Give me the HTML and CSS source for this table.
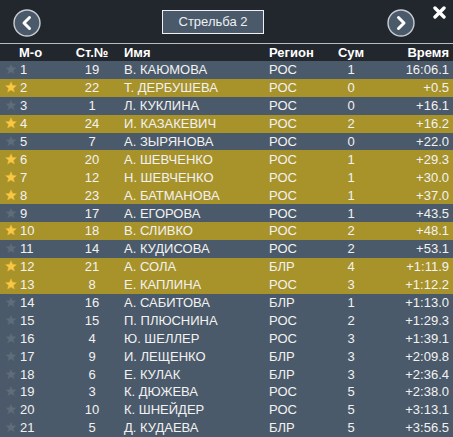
FILE: index.html
```html
<!DOCTYPE html>
<html lang="ru">
<head>
<meta charset="utf-8">
<link rel="stylesheet" href="styles.css">
</head>
<body>
<div class="app">
  <div class="topbar">
    <button class="nav nav-left" aria-label="prev">
      <svg width="28" height="28" viewBox="0 0 28 28"><circle cx="14" cy="14" r="13" fill="#4b5a6a" stroke="#c9ccd0" stroke-width="1.4"/><path d="M16.5 8.5 L11 14 L16.5 19.5" fill="none" stroke="#fff" stroke-width="3" stroke-linecap="round" stroke-linejoin="round"/></svg>
    </button>
    <div class="title">Стрельба 2</div>
    <button class="nav nav-right" aria-label="next">
      <svg width="28" height="28" viewBox="0 0 28 28"><circle cx="14" cy="14" r="13" fill="#4b5a6a" stroke="#c9ccd0" stroke-width="1.4"/><path d="M11.5 8.5 L17 14 L11.5 19.5" fill="none" stroke="#fff" stroke-width="3" stroke-linecap="round" stroke-linejoin="round"/></svg>
    </button>
    <div class="close"><svg width="13" height="13" viewBox="0 0 13 13"><path d="M2 2 L11 11 M11 2 L2 11" stroke="#fff" stroke-width="3.4" stroke-linecap="round"/></svg></div>
  </div>
  <div class="table">
    <div class="row head">
      <div class="c pos">М-о</div><div class="c num">Ст.№</div><div class="c name">Имя</div><div class="c reg">Регион</div><div class="c sum">Сум</div><div class="c time">Время</div>
    </div>
    <div id="rows"></div>
  </div>
</div>
<script src="app.js"></script>
</body>
</html>
```
FILE: app.js
```js
const data = [
  [0,1,19,"В. КАЮМОВА","РОС",1,"16:06.1"],
  [1,2,22,"Т. ДЕРБУШЕВА","РОС",0,"+0.5"],
  [0,3,1,"Л. КУКЛИНА","РОС",0,"+16.1"],
  [1,4,24,"И. КАЗАКЕВИЧ","РОС",2,"+16.2"],
  [0,5,7,"А. ЗЫРЯНОВА","РОС",0,"+22.0"],
  [1,6,20,"А. ШЕВЧЕНКО","РОС",1,"+29.3"],
  [1,7,12,"Н. ШЕВЧЕНКО","РОС",1,"+30.0"],
  [1,8,23,"А. БАТМАНОВА","РОС",1,"+37.0"],
  [0,9,17,"А. ЕГОРОВА","РОС",1,"+43.5"],
  [1,10,18,"В. СЛИВКО","РОС",2,"+48.1"],
  [0,11,14,"А. КУДИСОВА","РОС",2,"+53.1"],
  [1,12,21,"А. СОЛА","БЛР",4,"+1:11.9"],
  [1,13,8,"Е. КАПЛИНА","РОС",3,"+1:12.2"],
  [0,14,16,"А. САБИТОВА","БЛР",1,"+1:13.0"],
  [0,15,15,"П. ПЛЮСНИНА","РОС",2,"+1:29.3"],
  [0,16,4,"Ю. ШЕЛЛЕР","РОС",3,"+1:39.1"],
  [0,17,9,"И. ЛЕЩЕНКО","БЛР",3,"+2:09.8"],
  [0,18,6,"Е. КУЛАК","БЛР",3,"+2:36.4"],
  [0,19,3,"К. ДЮЖЕВА","РОС",5,"+2:38.0"],
  [0,20,10,"К. ШНЕЙДЕР","РОС",5,"+3:13.1"],
  [0,21,5,"Д. КУДАЕВА","БЛР",5,"+3:56.5"]
];
const star = '<svg class="star" width="12" height="12" viewBox="0 0 24 24"><polygon points="12,1.5 15.1,8.6 22.8,9.3 17,14.4 18.7,22 12,18 5.3,22 7,14.4 1.2,9.3 8.9,8.6"/></svg>';
const box = document.getElementById('rows');
box.innerHTML = data.map(r =>
  `<div class="row ${r[0] ? 'gold' : 'gray'}"><div class="c pos">${star}<span>${r[1]}</span></div><div class="c num">${r[2]}</div><div class="c name">${r[3]}</div><div class="c reg">${r[4]}</div><div class="c sum">${r[5]}</div><div class="c time">${r[6]}</div></div>`
).join('');
```
FILE: styles.css
```css
html, body {
  margin: 0;
  padding: 0;
  background: #22262d;
}
body {
  font-family: "Liberation Sans", Arial, sans-serif;
  color: #f2f2f2;
  width: 453px;
  height: 437px;
  overflow: hidden;
}
.topbar {
  height: 43px;
  border-bottom: 1px solid #b9bdc2;
  display: flex;
  align-items: center;
  position: relative;
}
.nav {
  background: none;
  border: 0;
  padding: 0;
  width: 28px;
  height: 28px;
  display: block;
}
.nav svg { display: block; }
.nav-left { margin-left: 13px; margin-top: 3px; }
.title {
  margin-left: 121px;
  margin-top: 1px;
  width: 100px;
  height: 22px;
  border: 1px solid #f0f0f0;
  background: #4b5a6a;
  font-size: 13px;
  line-height: 22px;
  text-align: center;
  color: #eef0f2;
}
.nav-right { margin-left: 123px; margin-top: 3px; }
.close {
  position: absolute;
  right: 7px;
  top: 6px;
  width: 13px;
  height: 13px;
}
.close svg { display: block; }
.row {
  display: grid;
  grid-template-columns: 61px 52px 151px 61px 42px 77px;
  padding: 0 4px 0 5px;
  height: 17.9px;
  align-items: center;
  font-size: 13px;
  white-space: nowrap;
}
.row.head {
  height: 17px;
  font-weight: bold;
  color: #ffffff;
}
.row.head .pos { padding-left: 14px; }
.row.gray { background: #4b5a6a; }
.row.gold { background: #a8932a; }
.c.pos {
  display: flex;
  align-items: center;
}
.star {
  display: block;
  margin-right: 3px;
  margin-top: -1px;
}
.gray .star { fill: #5f6c79; stroke: #55616e; stroke-width: 1; }
.gold .star { fill: #f8c844; stroke: #e5b43a; stroke-width: 1; }
.c.num { text-align: center; }
.c.name { padding-left: 6px; }
.c.sum { text-align: center; }
.c.time { text-align: right; }
```
